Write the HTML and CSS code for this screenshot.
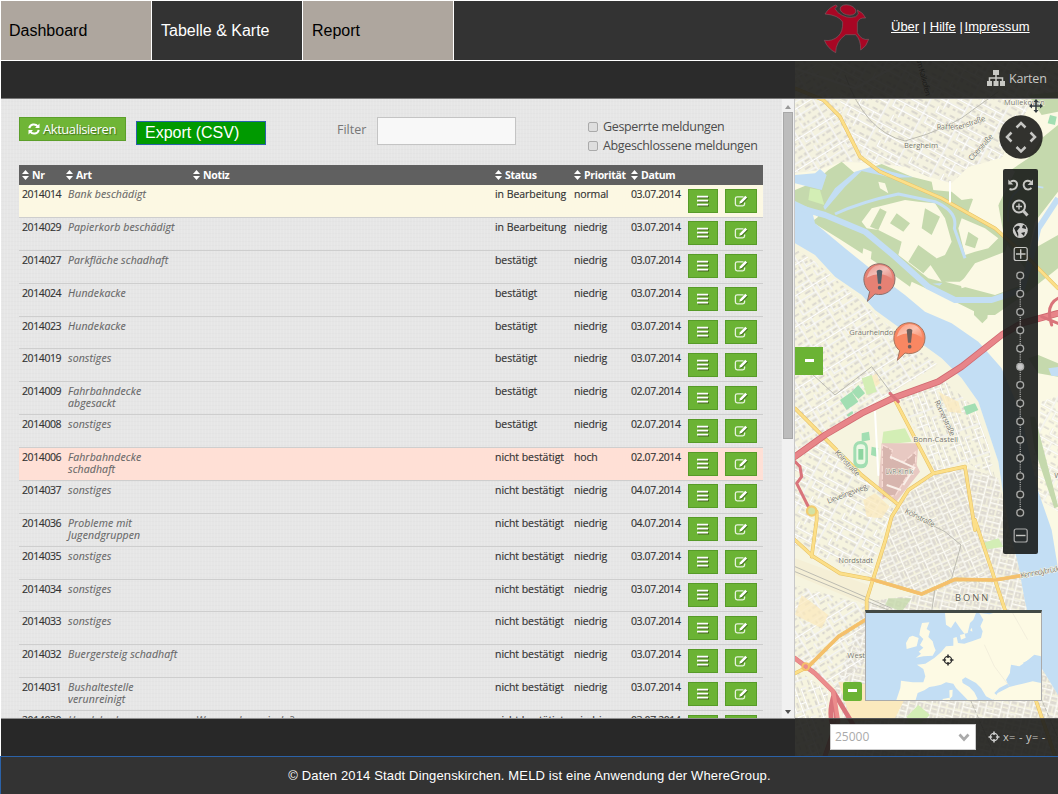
FILE: index.html
```html
<!DOCTYPE html>
<html lang="de">
<head>
<meta charset="utf-8">
<title>MELD – Tabelle &amp; Karte</title>
<link rel="stylesheet" href="styles.css">
</head>
<body>
<svg class="defs" width="0" height="0">
  <defs>
    <symbol id="sort" viewBox="0 0 7 10"><path d="M0 4 3.5 0 7 4zM0 6h7L3.5 10z" fill="#fff"/></symbol>
    <symbol id="list" viewBox="0 0 14 12"><path d="M2 2.700h11M2 6.700h11M2 10.700h11" stroke="#44651f" stroke-width="1.500"/><path d="M1 1.700h11M1 5.700h11M1 9.700h11" stroke="#fff" stroke-width="1.700"/></symbol>
    <symbol id="edit" viewBox="0 0 14 12"><g fill="none"><path d="M9.500 1.800H3.200Q1.400 1.800 1.400 3.600V9q0 1.800 1.800 1.800h5.600q1.800 0 1.800-1.800V7.500" stroke="#e8f3df" stroke-width="1.300"/><path d="M5.300 8.700 6 6.200 11.300.8 13.200 2.600 7.800 8z" fill="#3d6a1c" transform="translate(.7 .7)"/><path d="M5.300 8.700 6 6.200 11.300.8 13.200 2.600 7.800 8z" fill="#fff"/></g></symbol>
    <symbol id="target" viewBox="0 0 12 12"><g fill="none" stroke="currentColor"><circle cx="6" cy="6" r="3.700" stroke-width="1.300"/><path d="M6 .5v3.600M6 7.900v3.600M.5 6h3.600M7.900 6h3.600" stroke-width="1.600"/></g></symbol>
  </defs>
</svg>

<header class="nav">
  <a class="tab">Dashboard</a>
  <a class="tab active">Tabelle &amp; Karte</a>
  <a class="tab">Report</a>
  <svg class="logo" width="60" height="59" viewBox="0 3 180 177">
    <g fill="#a80624" stroke="#7d6268" stroke-width="1.800">
      <path d="M30 42Q42 22 62 15L67 18 60 26 69 38Q95 58 122 50L130 42 127 30Q145 38 152 54 132 52 127 68V98Q140 122 161 118 155 140 137 150 138 120 122 104H92Q62 125 62 158 38 146 28 121 52 125 70 108 84 95 83 66 70 45 30 42Z"/>
      <ellipse cx="99" cy="30" rx="24" ry="15" transform="rotate(14 99 30)"/>
    </g>
  </svg>
  <div class="links"><a>Über</a> | <a>Hilfe</a> <span>|</span> <a>Impressum</a></div>
</header>

<main class="app">
  <section class="left">
    <div class="bar"></div>
    <div class="panel">
      <div class="content">
        <div class="tools">
          <button class="refresh"><svg width="12" height="12" viewBox="0 0 12 12"><g fill="none" stroke="#fff" stroke-width="2"><path d="M1.300 5.200C2 .9 7.500.2 9.700 3.400M10.700 6.800C10 11.100 4.500 11.800 2.300 8.600"/></g><path d="M11.500.6V5H7zM.5 11.400V7H5z" fill="#fff"/></svg>Aktualisieren</button>
          <button class="export">Export (CSV)</button>
          <label class="flabel">Filter</label><span class="filter"></span>
          <div class="checks"><label><i></i>Gesperrte meldungen</label><label><i></i>Abgeschlossene meldungen</label></div>
        </div>
        <div class="row head"><b><svg><use href="#sort"/></svg>Nr</b><b><svg><use href="#sort"/></svg>Art</b><b><svg><use href="#sort"/></svg>Notiz</b><b><svg><use href="#sort"/></svg>Status</b><b><svg><use href="#sort"/></svg>Priorität</b><b><svg><use href="#sort"/></svg>Datum</b></div>
        <div class="row new"><span>2014014</span><em>Bank beschädigt</em><em></em><span>in Bearbeitung</span><span>normal</span><span>03.07.2014</span><button><svg><use href="#list"/></svg></button><button><svg><use href="#edit"/></svg></button></div>
        <div class="row"><span>2014029</span><em>Papierkorb beschädigt</em><em></em><span>in Bearbeitung</span><span>niedrig</span><span>03.07.2014</span><button><svg><use href="#list"/></svg></button><button><svg><use href="#edit"/></svg></button></div>
        <div class="row"><span>2014027</span><em>Parkfläche schadhaft</em><em></em><span>bestätigt</span><span>niedrig</span><span>03.07.2014</span><button><svg><use href="#list"/></svg></button><button><svg><use href="#edit"/></svg></button></div>
        <div class="row"><span>2014024</span><em>Hundekacke</em><em></em><span>bestätigt</span><span>niedrig</span><span>03.07.2014</span><button><svg><use href="#list"/></svg></button><button><svg><use href="#edit"/></svg></button></div>
        <div class="row"><span>2014023</span><em>Hundekacke</em><em></em><span>bestätigt</span><span>niedrig</span><span>03.07.2014</span><button><svg><use href="#list"/></svg></button><button><svg><use href="#edit"/></svg></button></div>
        <div class="row"><span>2014019</span><em>sonstiges</em><em></em><span>bestätigt</span><span>niedrig</span><span>03.07.2014</span><button><svg><use href="#list"/></svg></button><button><svg><use href="#edit"/></svg></button></div>
        <div class="row"><span>2014009</span><em>Fahrbahndecke<br>abgesackt</em><em></em><span>bestätigt</span><span>niedrig</span><span>02.07.2014</span><button><svg><use href="#list"/></svg></button><button><svg><use href="#edit"/></svg></button></div>
        <div class="row"><span>2014008</span><em>sonstiges</em><em></em><span>bestätigt</span><span>niedrig</span><span>02.07.2014</span><button><svg><use href="#list"/></svg></button><button><svg><use href="#edit"/></svg></button></div>
        <div class="row high"><span>2014006</span><em>Fahrbahndecke<br>schadhaft</em><em></em><span>nicht bestätigt</span><span>hoch</span><span>02.07.2014</span><button><svg><use href="#list"/></svg></button><button><svg><use href="#edit"/></svg></button></div>
        <div class="row"><span>2014037</span><em>sonstiges</em><em></em><span>nicht bestätigt</span><span>niedrig</span><span>04.07.2014</span><button><svg><use href="#list"/></svg></button><button><svg><use href="#edit"/></svg></button></div>
        <div class="row"><span>2014036</span><em>Probleme mit<br>Jugendgruppen</em><em></em><span>nicht bestätigt</span><span>niedrig</span><span>04.07.2014</span><button><svg><use href="#list"/></svg></button><button><svg><use href="#edit"/></svg></button></div>
        <div class="row"><span>2014035</span><em>sonstiges</em><em></em><span>nicht bestätigt</span><span>niedrig</span><span>03.07.2014</span><button><svg><use href="#list"/></svg></button><button><svg><use href="#edit"/></svg></button></div>
        <div class="row"><span>2014034</span><em>sonstiges</em><em></em><span>nicht bestätigt</span><span>niedrig</span><span>03.07.2014</span><button><svg><use href="#list"/></svg></button><button><svg><use href="#edit"/></svg></button></div>
        <div class="row"><span>2014033</span><em>sonstiges</em><em></em><span>nicht bestätigt</span><span>niedrig</span><span>03.07.2014</span><button><svg><use href="#list"/></svg></button><button><svg><use href="#edit"/></svg></button></div>
        <div class="row"><span>2014032</span><em>Buergersteig schadhaft</em><em></em><span>nicht bestätigt</span><span>niedrig</span><span>03.07.2014</span><button><svg><use href="#list"/></svg></button><button><svg><use href="#edit"/></svg></button></div>
        <div class="row"><span>2014031</span><em>Bushaltestelle<br>verunreinigt</em><em></em><span>nicht bestätigt</span><span>niedrig</span><span>03.07.2014</span><button><svg><use href="#list"/></svg></button><button><svg><use href="#edit"/></svg></button></div>
        <div class="row"><span>2014030</span><em>Hundekacke</em><em>Was machen wir da?</em><span>nicht bestätigt</span><span>niedrig</span><span>03.07.2014</span><button><svg><use href="#list"/></svg></button><button><svg><use href="#edit"/></svg></button></div>
      </div>
      <div class="scroll"><i class="up"></i><div class="thumb"></div><i class="down"></i></div>
    </div>
    <div class="bar lower"></div>
  </section>

  <section class="right">
    <svg class="map" viewBox="0 -102 789 2085" width="263" height="695">
      <defs>
        <pattern id="town" width="150" height="120" patternUnits="userSpaceOnUse" patternTransform="rotate(28) scale(.72)">
          <path d="M10 8h22v9H10zM42 6h12v14H42zM64 9h24v8H64zM112 8h10v16h-10zM132 10h10v10h-10zM8 38h12v12H8zM28 36h24v8H28zM64 44h10v20H64zM86 38h30v9H86zM130 40h10v22h-10zM10 66h28v9H10zM48 70h8v16h-8zM84 66h14v9H84zM108 70h10v14h-10zM8 98h12v10H8zM30 96h26v10H30zM70 98h26v8H70zM106 100h10v12h-10zM130 90h12v18h-12z" fill="#dad7cf"/>
          <path d="M0 27h58v28h92M58 0v27M58 88H0M58 55v65M102 0v27h48M80 55v33h70M124 55v65M22 55V27M0 55h58" fill="none" stroke="#dddbd0" stroke-width="8"/>
          <path d="M0 27h58v28h92M58 0v27M58 88H0M58 55v65M102 0v27h48M80 55v33h70M124 55v65M22 55V27M0 55h58" fill="none" stroke="#fff" stroke-width="5.500"/>
        </pattern>
        <pattern id="town2" href="#town" patternTransform="rotate(-32) scale(.66)"/>
        <pattern id="town3" href="#town" patternTransform="rotate(70) scale(.6)"/>
        <pattern id="city" width="110" height="90" patternUnits="userSpaceOnUse" patternTransform="rotate(14) scale(.62)">
          <path d="M4 4h26v26H4zM40 4h28v12H40zM40 24h28v14H40zM78 4h28v28H78zM4 42h26v18H4zM40 48h14v34H40zM60 48h12v34H60zM80 44h26v16H80zM4 70h26v14H4zM80 70h24v14H80z" fill="#dedad2"/>
          <path d="M12 10h8v9h-8zM86 12h10v12H86zM12 48h9v6h-9zM86 49h11v6H86z" fill="#f4f2e2"/>
          <path d="M0 0h110M35 0v90M73 0v90M0 36h35M35 43h75M0 65h35M73 65h37" fill="none" stroke="#d9d6cb" stroke-width="9"/>
          <path d="M0 0h110M35 0v90M73 0v90M0 36h35M35 43h75M0 65h35M73 65h37" fill="none" stroke="#fdfcf6" stroke-width="6.500"/>
        </pattern>
        <pattern id="city2" href="#city" patternTransform="rotate(-24) scale(.58)"/>
        <linearGradient id="gloss" x1="0" y1="0" x2="1" y2="1"><stop offset="0" stop-color="#fff" stop-opacity=".15"/><stop offset=".5" stop-color="#fff" stop-opacity=".5"/><stop offset="1" stop-color="#fff" stop-opacity=".05"/></linearGradient>
      </defs>
      <rect y="-102" width="789" height="2085" fill="#fbf9e4"/>
      <!-- built-up areas -->
      <path d="M0-102H789V0L700 40 650 120 620 190 520 215 470 265 400 245 330 215 230 205 140 200 70 225 0 235Z" fill="#f4f2e0"/>
      <path d="M100-102H789V0L700 40 650 120 620 190 520 215 470 265 400 245 330 215 230 205 160 100Z" fill="url(#town)"/>
      <path d="M0-102H60L160 90 215 200 140 200 70 225 0 235Z" fill="url(#town2)"/>
      <path d="M0 445 60 480 200 600 330 710 440 790 500 850 550 920 580 1010 610 1100 640 1290 670 1410 690 1520 740 1720 789 1800V1983H0Z" fill="#f6f4df"/>
      <path d="M0 460 60 500 200 620 330 735 430 810 330 870 200 945 90 1010 0 1070Z" fill="url(#town2)"/>
      <path d="M310 900 440 850 540 940 580 1050 600 1150 510 1100 420 1130Z" fill="url(#town3)"/>
      <path d="M0 1100 90 1030 240 1180 300 1230 270 1300 225 1450 0 1350Z" fill="url(#town)"/>
      <path d="M240 1450 300 1230 415 1135 510 1115 540 1300 600 1455 380 1497Z" fill="url(#city2)"/>
      <path d="M510 1115 610 1150 640 1290 670 1410 690 1520 740 1720 789 1800V1983H180L120 1780 215 1520 380 1497 600 1455 540 1300Z" fill="url(#city)"/>
      <path d="M0 1470 210 1530V1700L120 1780 0 1680Z" fill="url(#town2)"/>
      <path d="M0 1720 100 1790 80 1983H0Z" fill="url(#town3)"/>
      <path d="M700 1190 789 1250V900L740 920Z" fill="url(#town)" opacity=".8"/>
      <path d="M130 1760 240 1770 330 1810 300 1870 170 1880Z" fill="#fbe9bd"/>
      <path d="M0 1390 220 1470 215 1530 0 1440Z" fill="#f5efd6"/>
      <path d="M205 1215 240 1195 285 1235 260 1270 215 1265ZM220 850l25-15 10 30-25 20ZM430 890l60 30 10 35-40-5ZM20 1500l80 60-20 40-80-40Z" fill="#fbe9bd" opacity=".75"/>
      <!-- green spaces -->
      <g fill="#c5d9ad">
        <path d="M60 260 100 225 140 200 180 235 260 207 350 245 410 260 415 285 470 290 500 315 535 310 520 350 600 400 640 440 630 470 580 490 540 505 500 560 450 560 600 600 680 570 700 470 789 420V520L700 590 600 660H560L480 620 350 560 345 575 240 500 130 430 50 380 70 365 0 320V285Z"/>
        <path d="M789 90V290L720 380 690 520 630 440 610 330 640 230 700 190 740 130ZM700 0 789-10V50L740 60ZM537 630l45-5-5 45-15 15-25-25ZM700 790l30-10 59 25v40l-60-10ZM705 965l15 0 70 270-12 5-60-180Z"/>
        <path d="M280 1510 350 1510 320 1550 270 1530Z" opacity=".8"/>
      </g>
      <g fill="#fbf9e4">
        <path d="M200 380 230 340 270 330 330 315 370 320 420 325 450 370 470 440 450 480 400 500 440 560 400 550 310 480 320 440 250 405 215 400Z"/>
        <path d="M500 370 570 400 610 430 580 460 540 470 510 480 490 400ZM520 540 580 500 630 480V550L590 580 560 560 500 580 495 560ZM205 460 230 470 225 510 200 490ZM250 260 270 265 280 295 255 280ZM610 190 660 230 610 330 590 350 470 270 540 215Z"/>
      </g>
      <g fill="#c5d9ad"><path d="M305 355 345 385 325 410 285 385ZM255 340 275 350 250 405 225 395ZM370 450 425 490 385 535 340 500ZM390 340 435 365 410 420 380 400ZM520 410 550 430 540 460 510 450Z"/></g>
      <g fill="#d3eeb5"><path d="M45 280 75 285 88 330 40 315ZM265 1010 330 1000 350 1040 260 1050ZM200 850 230 840 245 890 215 900ZM335 1865 370 1830 405 1860 350 1910ZM560 1345 610 1330 625 1355 565 1365Z"/></g>
      <g fill="#a2deb2"><path d="M135 915 170 890 190 920 155 945ZM170 890 190 870 210 895 190 912ZM505 935 540 925 550 945 515 960ZM230 1055 250 1060 245 1085 228 1080ZM200 1015 222 1010 225 1035 200 1040ZM765 60 785 65 780 90 758 85ZM155 960 172 948 175 955 160 965Z"/></g>
      <path d="M260 1045 370 1045 365 1110 375 1130 300 1225 250 1185Z" fill="#e8c9c2"/>
      <path d="M262 1050l30 15-5 25 40 10 35-30v30l-60 100-40 10z" fill="#d7b5ae" stroke="#f7dcd5" stroke-width="4" stroke-dasharray="18 5"/>
      <path d="M285 1085 358 1118 325 1170M275 1170 318 1185" fill="none" stroke="#faf0e9" stroke-width="6"/>
      <!-- stadium -->
      <rect x="175" y="1038" width="44" height="82" rx="20" fill="#a2deb2"/><rect x="184" y="1048" width="27" height="60" rx="12" fill="#ecf8e4"/><rect x="190" y="1062" width="15" height="32" fill="#8dd5a0"/>
      <!-- water -->
      <g fill="#c3def4">
        <path d="M0 318 50 342 60 385 150 460 250 540 330 600 390 650 470 685 550 740 620 820 680 960 700 1060 730 1190 770 1305 789 1420V1800L740 1720 690 1520 670 1410 640 1290 625 1200 610 1100 580 1010 550 920 500 850 440 790 330 710 240 645 200 600 120 545 60 480 0 445Z"/>
        <path d="M0 240 60 235 75 222 95 240 80 285 0 265ZM85 335Q100 310 120 280L180 230 240 212 290 230 355 247 290 248 200 228 150 275 90 345ZM760 820l29-4v28l-20-2ZM412 566l30-2-8 8Z"/>
      </g>
      <g fill="none" stroke="#c3def4" stroke-linejoin="round">
        <path d="M0 335 90 360 210 410 300 485 400 575 480 615 590 615 680 585 705 500 730 400 789 310" stroke-width="18"/>
        <path d="M120 357Q200 320 310 297L420 320Q490 350 478 400L510 490" stroke-width="9"/><path d="M640 380Q630 290 700 270L745 278" stroke-width="5"/>
      </g>
      <!-- railways and roads -->
      <g fill="none" stroke="#bdbcb2" stroke-width="3"><path d="M150-60Q210 110 330 138 470 100 540 40L610-10"/><path d="M0 790 120 900 230 815 290 895"/><path d="M380 1275 450 1310 498 1350 470 1450 420 1480 410 1550"/><path d="M0 1430 280 1545M0 1415 290 1540"/><path d="M520 1800 600 1983M700 1720 789 1930" stroke-dasharray="12 4"/></g>
      <g fill="none" stroke-linejoin="round" stroke-linecap="round">
        <path d="M0-20 85 15 135 65 195 185 255 230 440 310 600 400 700 490 789 580M0 940 90 1030 200 1140 305 1225M300 915 415 1135 510 1115 540 1305M415 1135 340 1185 290 1265 270 1340 235 1450 215 1515V1575M0 1335 55 1385 135 1435 230 1453 380 1497 480 1453 600 1455 690 1440M540 1275 600 1455 630 1545 700 1750 780 1983M65 1250V1275L50 1385M210 1575 130 1625 40 1715 0 1735" stroke="#e5c065" stroke-width="11"/>
        <path d="M0-20 85 15 135 65 195 185 255 230 440 310 600 400 700 490 789 580M0 940 90 1030 200 1140 305 1225M300 915 415 1135 510 1115 540 1305M415 1135 340 1185 290 1265 270 1340 235 1450 215 1515V1575M0 1335 55 1385 135 1435 230 1453 380 1497 480 1453 600 1455 690 1440M540 1275 600 1455 630 1545 700 1750 780 1983M65 1250V1275L50 1385M210 1575 130 1625 40 1715 0 1735" stroke="#fcdf88" stroke-width="8"/>
        <path d="M230 1453 380 1497 480 1453 600 1455 690 1440M210 1575 130 1625 40 1715" stroke="#f5bf6b" stroke-width="9"/>
        <path d="M465 260V320M0-80 180-20 330-102M240 950 250 1140" stroke="#fff" stroke-width="6"/>
        <path d="M0 1085 90 1020 200 955 300 907 430 860 500 815 620 720 680 685 789 655" stroke="#cf6970" stroke-width="20"/>
        <path d="M0 1085 90 1020 200 955 300 907 430 860 500 815 620 720 680 685 789 655" stroke="#e88589" stroke-width="15"/>
        <path d="M0 1100 15 1115 20 1145 5 1165 45 1245M285 895 310 920M770 690Q750 630 789 610M740 665 789 685" stroke="#d9747b" stroke-width="9"/>
        <path d="M0 1690 60 1735 115 1790 125 1880 90 1983M115 1790 175 1890M118 1795Q100 1850 112 1890" stroke="#d9747b" stroke-width="14"/>
        <path d="M0 1690 60 1735 115 1790 130 1880 90 1983" stroke="#eb8c8c" stroke-width="12"/>
        <circle cx="50" cy="1248" r="14" fill="#d3e2a4" stroke="#f2cd70" stroke-width="7"/><circle cx="32" cy="1715" r="10" stroke="#f5bf6b" stroke-width="6"/>
      </g>
      <!-- place names -->
      <g class="names">
        <text x="327" y="158" textLength="102">Bergheim</text>
        <text x="627" y="29" textLength="122" font-size="22">Mullekoven</text>
        <text transform="translate(425 104) rotate(-1)" textLength="66">Raiffeis</text><text transform="translate(493 104) rotate(-19)" textLength="84">enstraße</text>
        <text transform="translate(530 199) rotate(-48)" textLength="98">Oberstraße</text>
        <text transform="translate(362 -112) rotate(75)" textLength="120" class="dim">um Kalkofen</text>
        <text x="163" y="719" textLength="148">Graurheindorf</text>
        <text transform="translate(418 920) rotate(65)" textLength="116">Römerstraße</text>
        <text x="355" y="1042" textLength="134">Bonn-Castell</text>
        <text x="272" y="1138" textLength="82" class="sm">LVR-Klinik</text>
        <text transform="translate(118 1074) rotate(47)" textLength="98">Kölnstraße</text>
        <text transform="translate(100 1226) rotate(-21)" textLength="126">Lievelingsweg</text>
        <text transform="translate(328 1253) rotate(27)" textLength="98">Kölnstraße</text>
        <text x="130" y="1404" textLength="104">Nordstadt</text>
        <text x="480" y="1519" class="big" textLength="100">BONN</text>
        <text transform="translate(678 1450) rotate(-11)" textLength="130">Kennedybrücke</text>
        <text x="157" y="1688">West</text>
        <text x="778" y="1150">W</text>
      </g>
      <!-- report markers -->
      <g><path d="M217 619 224 590C200 570 200 530 230 512 264 495 300 518 300 552 300 585 270 605 240 597Z" fill="#e58174" stroke="#8d706c" stroke-width="3"/><path d="M215 548Q225 512 254 510 290 513 293 553 260 525 215 548Z" fill="url(#gloss)"/><path d="M245 528q8-8 17 0l-4 38h-9z" fill="#53606a"/><circle cx="254" cy="578" r="5.500" fill="#53606a"/></g>
      <g transform="translate(90 177)"><path d="M217 619 224 590C200 570 200 530 230 512 264 495 300 518 300 552 300 585 270 605 240 597Z" fill="#f98762" stroke="#a5755f" stroke-width="3"/><path d="M215 548Q225 512 254 510 290 513 293 553 260 525 215 548Z" fill="url(#gloss)"/><path d="M245 528q8-8 17 0l-4 38h-9z" fill="#71605c"/><circle cx="254" cy="578" r="5.500" fill="#71605c"/></g>
    </svg>
    <div class="maptop"><svg width="18" height="16" viewBox="0 0 18 16"><path d="M6 0h6v5H6zM0 11h5v5H0zM6.500 11h5v5h-5zM13 11h5v5h-5z" fill="#c9c9c5"/><path d="M9 5v6M2.500 11V8h13v3" fill="none" stroke="#c9c9c5" stroke-width="1.500"/></svg>Karten</div>
    <svg class="move" width="14" height="14" viewBox="0 0 14 14"><path d="M7 2v10M2 7h10" stroke="#333b40" stroke-width="1.600"/><path d="M4.500 3 7 0l2.500 3zM4.500 11 7 14l2.500-3zM3 4.500 0 7l3 2.500zM11 4.500 14 7l-3 2.500z" fill="#333b40"/></svg>
    <svg class="pan" width="44" height="44" viewBox="0 0 44 44"><circle cx="22" cy="22" r="21.700" fill="#252522" fill-opacity=".94"/><path d="M17.500 12.500 22 8l4.500 4.500M17.500 32 22 36.500l4.500-4.500M12.500 17.500 8 22l4.500 4.500M31.500 17.500 36 22l-4.500 4.500" fill="none" stroke="#c7c7c4" stroke-width="2.500"/></svg>
    <svg class="zoombar" width="35" height="385" viewBox="0 0 35 385">
      <rect width="35" height="385" rx="2" fill="#181b1a" fill-opacity=".9"/>
      <g fill="none" stroke="#c7c7c4">
        <path d="M7.500 12.800C12 10 15 13.500 13.800 17 12.800 20.500 9 21 6.500 20M28 12.800C23 10 20 13.500 20.800 17 21.800 21 26 21.500 28.500 19" stroke-width="1.900"/>
        <circle cx="16" cy="37.500" r="6" stroke-width="2"/><path d="m20.500 42 4 4.500" stroke-width="3"/><path d="M13 37.500h6M16 34.500v6" stroke-width="1.400"/>
        <rect x="11.200" y="78.500" width="13" height="13" rx="2" stroke-width="1.200"/><path d="M13 85h9.500M17.700 80.300v9.500" stroke-width="1.400"/>
        <rect x="11.200" y="360" width="13" height="13" rx="2" stroke-width="1.200" stroke="#aaa"/><path d="M13 366.500h9.500" stroke-width="1.400"/>
        <path d="M17.200 106v238" stroke-width="1" stroke-dasharray="1.200 1"/>
      </g>
      <path d="M5.300 10.500v5h5zM30 10.500v5.500h-5.500z" fill="#c7c7c4"/>
      <circle cx="17.300" cy="61.500" r="7.500" fill="#ccccca"/><path d="M11 59q4-4 6-1l-3 4q2 2 1 6zM20 56q3 0 3 4l-4-1zM18 64l4-1-1 4z" fill="#272a28"/>
      <g fill="#292b29" stroke="#a9aaa8" stroke-width="1.400"><circle cx="17.200" cy="106.500" r="3.400"/><circle cx="17.200" cy="124.750" r="3.400"/><circle cx="17.200" cy="143" r="3.400"/><circle cx="17.200" cy="161.250" r="3.400"/><circle cx="17.200" cy="179.500" r="3.400"/><circle cx="17.200" cy="197.750" r="3.400" fill="#c7c7c7"/><circle cx="17.200" cy="216" r="3.400"/><circle cx="17.200" cy="234.250" r="3.400"/><circle cx="17.200" cy="252.500" r="3.400"/><circle cx="17.200" cy="270.750" r="3.400"/><circle cx="17.200" cy="289" r="3.400"/><circle cx="17.200" cy="307.250" r="3.400"/><circle cx="17.200" cy="325.500" r="3.400"/><circle cx="17.200" cy="343.750" r="3.400"/></g>
    </svg>
    <button class="collapse"></button>
    <button class="collapse small"></button>
    <div class="overview">
      <svg width="175" height="88" viewBox="0 0 525 264"><rect width="525" height="264" fill="#c3def4"/>
        <!-- mainland -->
        <path d="M340 0 370 4 382 0H525V130L505 125 475 150 460 160 435 155 432 180 420 200 425 212 400 225 385 240 395 250 380 260 360 250 345 225 330 210 312 200 298 193 288 200 290 210 310 222 325 238 335 258 325 264H308L290 245 270 225 262 212 240 208 225 215 205 220 190 222 175 232 155 240 148 264H90L103 225 105 203 140 208 172 208 178 190 172 168 153 155 178 152 205 135 225 118 240 100 262 98 262 75 272 72 276 90 295 92 320 84 345 75 350 55 343 40 352 20Z" fill="#fdfae4"/>
        <!-- Scandinavia -->
        <path d="M237 0 240 35 255 45 268 25 282 45 295 62 305 60 312 30 322 20 330 0Z" fill="#fdfae4"/>
        <path d="M282 66l14-4 3 12-14 6zM312 52l6-8 1 12z" fill="#fdfae4"/>
        <!-- British Isles -->
        <path d="M168 30 190 28 182 48 192 55 187 72 200 85 204 100 209 112 200 128 172 130 150 134 165 122 158 116 172 104 162 96 172 78 160 66 163 48ZM140 68 158 75 152 100 122 108 120 90 130 72Z" fill="#fdfae4"/>
        <!-- islands and seas -->
        <path d="M250 232l10-2-1 20-8 8zM230 258l20-4 4 10h-24z" fill="#fdfae4"/>
        <path d="M380 264 395 240 430 222 470 212 500 205 525 210V264Z" fill="#fdfae4"/>
        <path d="M470 150 490 140 502 128 500 145 482 158Z" fill="#c3def4"/>
        <path d="M525 165 500 170 478 158 470 172 490 195 525 205Z" fill="#c3def4"/>
        <path d="M435 160 465 165 490 185 505 200 470 205 430 200Z" fill="#c3def4"/>
        <path d="M355 95 385 160M440 0 485 80M385 160 430 220" stroke="#ede9d8" stroke-width="2"/>
      </svg>
      <svg class="cross" width="12" height="12"><use href="#target"/></svg>
    </div>
    <div class="mapbottom"><div class="scale">25000<svg width="12" height="9" viewBox="0 0 12 9"><path d="m1.500 1.500 4.500 5 4.500-5" fill="none" stroke="#aaa" stroke-width="2.700"/></svg></div><svg class="tg" width="12" height="12"><use href="#target"/></svg><span>x= - y= -</span></div>
  </section>
</main>
<footer>© Daten 2014 Stadt Dingenskirchen. MELD ist eine Anwendung der WhereGroup.</footer>
</body>
</html>
```
FILE: styles.css
```css
* { box-sizing: border-box; }
body { margin: 0; width: 1058px; height: 794px; overflow: hidden; background: #fff; font-family: "Liberation Sans", Arial, sans-serif; }
.defs { position: absolute; }
button { border: 0; padding: 0; margin: 0; display: block; font-family: inherit; }

.nav { height: 61px; display: flex; gap: 1px; padding: 1px 0 0 1px; background: linear-gradient(90deg, #fff 454px, #333 454px); border-bottom: 1px solid #fff; box-shadow: inset 0 1px #fff; }
.tab { width: 150px; padding: 20px 8px; font-size: 16px; line-height: 20px; background: #aea69e; color: #000; }
.tab:nth-child(3) { padding-left: 9px; }
.tab.active { background: #333; color: #fff; padding-left: 9px; }
.logo { margin: 0 0 0 361px; }
.links { margin: 16px 0 0 15px; white-space: nowrap; font-size: 13px; line-height: 20px; color: #fff; }
.links a { text-decoration: underline; }
.links a:last-child { letter-spacing: .1px; margin-left: -2px; }

.app { height: 695px; display: grid; grid-template-columns: 795px 263px; }
.left { display: flex; flex-direction: column; padding-left: 1px; }
.bar { height: 37px; background: #2b2b2b; }
.lower { height: 37px; background: #282828; }
.panel { height: 621px; display: flex; border-top: 1px solid #777; border-bottom: 1px solid #909090; overflow: hidden;
  background: repeating-linear-gradient(90deg, rgba(255,255,255,.1) 0 1px, transparent 1px 3px), repeating-linear-gradient(0deg, rgba(0,0,0,.01) 0 1px, transparent 1px 4px), #e6e6e6; }
.content { width: 781px; padding: 18px 0 0 18px; font-family: "Open Sans", sans-serif; }
.tools { height: 48px; display: flex; align-items: flex-start; }
.refresh { width: 107px; height: 24px; display: flex; align-items: center; gap: 3px; padding-left: 8px; background: #6fb536; border: 1px solid #5c9f2a; color: #fff; font-size: 13px; letter-spacing: -.45px; text-shadow: 1px 1px 1px #40701d; white-space: nowrap; }
.export { width: 130px; height: 24px; margin: 4px 0 0 10px; background: #009a00; border: 1px solid #2b62a8; color: #fff; font: 16px/20px "Liberation Sans", sans-serif; text-align: left; padding-left: 8px; }
.flabel { margin: 4px 10px 0 71px; width: 30px; font-size: 12.5px; line-height: 18px; color: #777; }
.filter { width: 139px; height: 28px; background: #f8f8f8; border: 1px solid #c4c4c4; }
.checks { margin: 0 0 0 72px; color: #4c4c4c; font-size: 12.5px; letter-spacing: -.34px; white-space: nowrap; }
.checks label { display: flex; align-items: center; height: 19px; gap: 5px; }
.checks i { width: 10px; height: 10px; border: 1px solid #aaa; border-radius: 2px; background: #dedede; }
.row { width: 744px; height: 32.88px; padding: 3px 0 0 3px; display: grid; grid-template-columns: 44px 127px 302px 79px 57px 57px 37px 32px; border-bottom: 1px solid #cecece; font-size: 10.5px; line-height: 12px; letter-spacing: -.05px; color: #333; white-space: nowrap; }
.row span { -webkit-text-stroke: .15px #333; }
.row span:first-child, .row span:nth-child(6) { letter-spacing: -.4px; }
.row span:nth-child(5) { letter-spacing: -.15px; }
.row em { color: #686868; padding-left: 2px; letter-spacing: .12px; -webkit-text-stroke: .12px #686868; }
.row em + em { padding-left: 3px; }
.row button { width: 30px; height: 24px; margin-top: .6px; background: #6bb334; border: 1px solid #579b28; display: flex; align-items: center; justify-content: center; }
.row button:last-child { width: 32px; }
.row button svg { width: 14px; height: 12px; }
.row.head { height: 20px; padding-top: 0; background: #606060; border: 0; color: #fff; line-height: 20px; letter-spacing: -.3px; }
.head b { display: flex; align-items: center; gap: 3px; }
.head svg { width: 7px; height: 10px; }
.new { background: #fcf8e3; }
.high { background: #ffe0d6; }
.scroll { width: 13px; background: #f1f1f1; display: flex; flex-direction: column; align-items: center; padding-top: 6px; border-right: 1px solid #c8c8c8; }
.up, .down { border: 3px solid transparent; }
.up { border-bottom: 4px solid #999; border-top: 0; }
.down { border-top: 4px solid #505050; border-bottom: 0; margin-top: auto; margin-bottom: 4px; }
.thumb { width: 10px; height: 327px; margin-top: 3px; background: #bcbcbc; border: 1px solid #a8a8a8; }

.right { position: relative; height: 695px; overflow: hidden; display: flex; flex-direction: column; justify-content: space-between; }
.map { position: absolute; inset: 0; }
.names { font-family: "Open Sans", sans-serif; font-size: 23px; fill: #767672; stroke: #faf8e8; stroke-width: 3px; paint-order: stroke; }
.names .big { font-size: 28px; fill: #5c5c56; }
.names .sm { font-size: 19px; }
.names .dim { fill: #000; stroke: none; }
.maptop, .mapbottom { position: relative; display: flex; background: rgba(29,29,27,.9); color: #c9c9c5; font-family: "Open Sans", sans-serif; }
.maptop { height: 38px; align-items: center; gap: 4px; padding: 0 0 3px 192px; font-size: 12.5px; letter-spacing: -.2px; border-bottom: 1px solid #777; }
.mapbottom { height: 38px; padding: 5px 0 0 35px; border-top: 1px solid #555; font-size: 11px; }
.scale { width: 146px; height: 26px; background: #fff; border: 1px solid #ccc; color: #aaa; font-size: 12px; line-height: 24px; padding: 0 5px 0 4px; display: flex; justify-content: space-between; align-items: center; }
.tg { margin: 7px 3px 0 12px; color: #ccc; }
.mapbottom span { line-height: 26px; white-space: nowrap; letter-spacing: .35px; }
.move { position: absolute; left: 234px; top: 38px; }
.pan { position: absolute; left: 204px; top: 54px; }
.zoombar { position: absolute; left: 208px; top: 108px; }
.collapse { position: absolute; left: 0; top: 286px; width: 28px; height: 28px; background: #6bb334; display: flex; align-items: center; justify-content: center; }
.collapse::after { content: ""; width: 9px; height: 3px; margin-bottom: 2px; background: #fff; }
.collapse.small { left: 48px; top: 621px; width: 19px; height: 19px; border-radius: 2px; }
.overview { position: absolute; left: 70px; top: 549px; width: 177px; height: 91px; border: 1px solid #aaa; border-top: 3px solid #424944; overflow: hidden; }
.overview svg { display: block; }
.overview .cross { position: absolute; left: 76px; top: 41px; color: #333; }

footer { height: 38px; background: #333; border-top: 1px solid #2b62a8; border-left: 1px solid #2b62a8; color: #fff; font-size: 13px; letter-spacing: .15px; line-height: 38px; text-align: center; }
```
